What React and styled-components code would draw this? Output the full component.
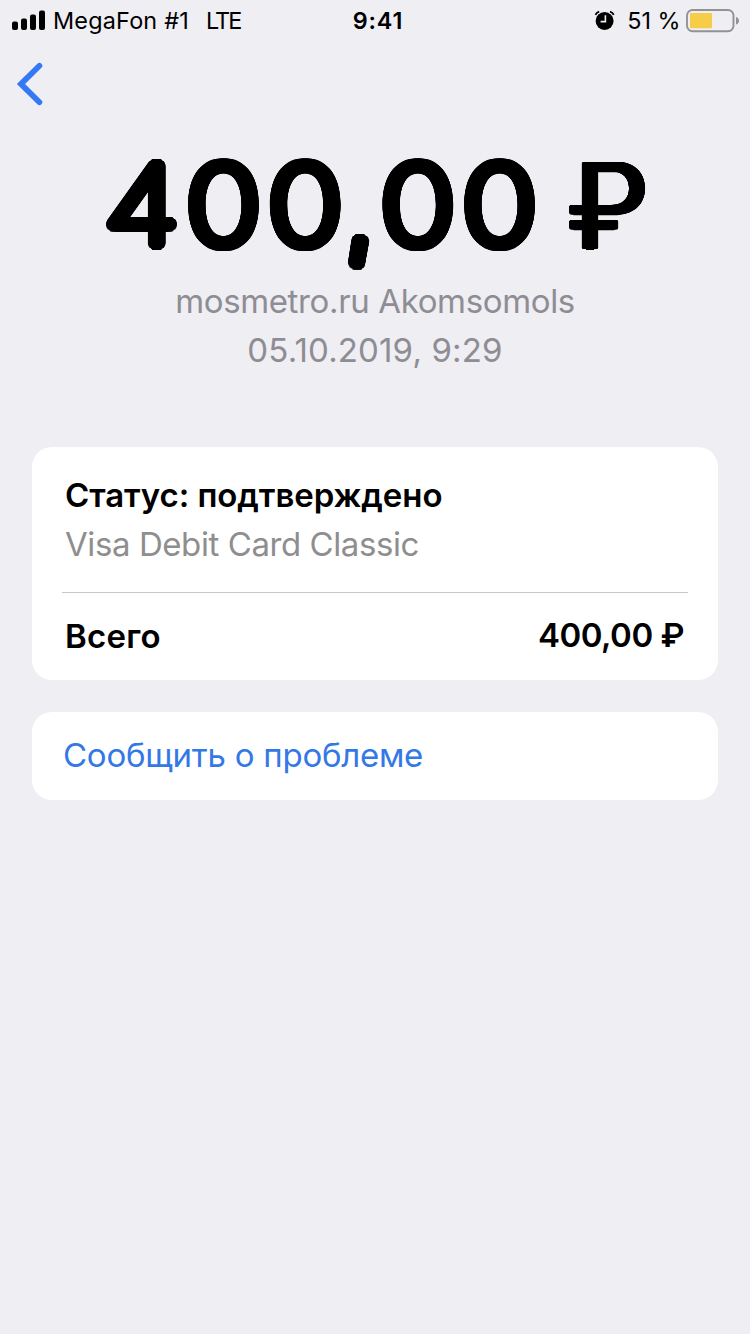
import React from "react";
import styled, { createGlobalStyle } from "styled-components";

// spreads a thin copy of the glyphs around an ellipse, so stroke ends come out round
const roundShadow = (rx, ry) => {
  const parts = [];
  for (let i = 0; i < 40; i++) {
    const angle = (i * Math.PI) / 20;
    const x = (Math.cos(angle) * rx).toFixed(2);
    const y = (Math.sin(angle) * ry).toFixed(2);
    parts.push(`${x}px ${y}px 0 currentColor`);
  }
  return parts.join(", ");
};

const SignalIcon = () => (
  <svg width="34" height="22" viewBox="0 0 34 22">
    <rect x="0" y="11.5" width="6" height="8.5" rx="2" />
    <rect x="9" y="8.5" width="6" height="11.5" rx="2" />
    <rect x="18" y="4.5" width="6" height="15.5" rx="2" />
    <rect x="27" y="0.5" width="6" height="19.5" rx="2" />
  </svg>
);

const AlarmIcon = () => (
  <svg width="20" height="20" viewBox="0 0 20 20">
    <circle cx="9.6" cy="9.9" r="9" />
    <path d="M0.5 3.9Q1.4 1.5 4.2 0.7M18.7 3.9Q17.8 1.5 15 0.7" stroke="#efeef3" strokeWidth="4" fill="none" />
    <path d="M0.5 3.9Q1.4 1.5 4.2 0.7M18.7 3.9Q17.8 1.5 15 0.7" stroke="#000" strokeWidth="1.8" fill="none" />
    <path d="M10.4 4.2V10.6H5.6" stroke="#efeef3" strokeWidth="1.6" fill="none" />
  </svg>
);

const BatteryIcon = () => (
  <svg width="54" height="24" viewBox="0 0 54 24">
    <rect x="1" y="1" width="46.5" height="21.2" rx="5.5" fill="none" stroke="#929196" strokeWidth="1.9" />
    <rect x="4" y="4" width="22" height="15.3" rx="1.2" fill="#f7cc46" />
    <path d="M50 8Q53 9 53 11.8T50 15.5Z" fill="#929196" />
  </svg>
);

const BackIcon = () => (
  <svg width="28" height="44" viewBox="0 0 28 44">
    <path d="M23.4 3.8L5 22L23.4 40.2" fill="none" stroke="#3478f6" strokeWidth="5.8" strokeLinecap="round" />
  </svg>
);

const App = () => {
  return (
    <React.Fragment>
      <GlobalStyle />
      <Screen>
        <StatusBar>
          <Carrier>
            <SignalIcon />
            <StatusText spacing="0.2px">MegaFon #1</StatusText>
            <Network spacing="-1.9px">LTE</Network>
          </Carrier>
          <Clock>9:41</Clock>
          <Power>
            <AlarmIcon />
            <StatusText spacing="0px">51 %</StatusText>
            <BatteryIcon />
          </Power>
        </StatusBar>
        <NavBar>
          <BackButton aria-label="Назад">
            <BackIcon />
          </BackButton>
        </NavBar>
        <Summary>
          <Amount>
            <Digits>
              400<Comma>,</Comma>00
            </Digits>
            <Currency>₽</Currency>
          </Amount>
          <Line color="#8e8d93" spacing="-0.36px">mosmetro.ru Akomsomols</Line>
          <Line color="#8e8d93" spacing="0.15px">05.10.2019, 9:29</Line>
        </Summary>
        <Card>
          <StatusBlock>
            <Line bold spacing="-0.08px">Статус: подтверждено</Line>
            <Line color="#8e8e8e" spacing="-0.42px">Visa Debit Card Classic</Line>
          </StatusBlock>
          <TotalRow>
            <Line bold spacing="0.25px">Всего</Line>
            <Total bold spacing="-0.5px">400,00 ₽</Total>
          </TotalRow>
        </Card>
        <Card>
          <LinkRow>
            <Line color="#3478e6" spacing="-0.25px">Сообщить о проблеме</Line>
          </LinkRow>
        </Card>
      </Screen>
    </React.Fragment>
  );
};

const GlobalStyle = createGlobalStyle`
  body {
    margin: 0;
    background: #efeef3;
  }
  svg {
    display: block;
    flex-shrink: 0;
    overflow: visible;
  }
`;
const Screen = styled.main`
  width: 750px;
  height: 1334px;
  overflow: hidden;
  background: #efeef3;
  color: #000;
  font-family: Inter, "Liberation Sans", sans-serif;
`;
const StatusBar = styled.header`
  display: grid;
  grid-template-columns: 1fr auto 1fr;
  align-items: center;
  height: 42px;
  padding: 0 10px 0 12px;
`;
const Carrier = styled.div`
  display: flex;
  align-items: center;
`;
const StatusText = styled.span`
  font-size: 23.4px;
  line-height: 42px;
  white-space: pre;
  letter-spacing: ${(props) => props.spacing};
  margin-left: 7px;
`;
const Network = styled(StatusText)`
  margin-left: 17px;
`;
const Clock = styled.span`
  padding-left: 4px;
  font-size: 23.4px;
  font-weight: 600;
  line-height: 42px;
  letter-spacing: 0.8px;
`;
const Power = styled.div`
  display: flex;
  align-items: center;
  justify-content: flex-end;
  gap: 5.5px;
`;
const NavBar = styled.nav`
  box-sizing: border-box;
  height: 86px;
  display: flex;
  align-items: center;
  padding: 0 0 2px 16px;
`;
const BackButton = styled.button`
  border: 0;
  padding: 0;
  background: none;
`;
const Summary = styled.section`
  display: flex;
  flex-direction: column;
  align-items: center;
  height: 319px;
`;
const Amount = styled.h1`
  box-sizing: border-box;
  display: flex;
  justify-content: space-between;
  width: 750px;
  height: 149px;
  margin: 0;
  padding: 0 102px 0 104px;
  white-space: pre;
`;
const Digits = styled.span`
  line-height: 154px;
  font-size: 108px;
  font-weight: 100;
  letter-spacing: 6.4px;
  text-shadow: ${roundShadow(6.2, 6.2)};
  transform: scaleX(1.165);
  transform-origin: left;
`;
const Comma = styled.span`
  display: inline-block;
  line-height: 1;
  margin: 0 -0.6px 0 -8.6px;
  transform: translateY(4px) skewX(5deg);
`;
const Currency = styled.span`
  line-height: 156px;
  font-size: 117px;
  font-weight: 300;
  text-shadow: ${roundShadow(4, 1.5)};
`;
const Line = styled.p.withConfig({ shouldForwardProp: (prop) => prop === "children" })`
  margin: 0;
  font-size: 33px;
  line-height: 49px;
  white-space: pre;
  font-weight: ${(props) => (props.bold ? 600 : 400)};
  color: ${(props) => props.color || "#000"};
  letter-spacing: ${(props) => props.spacing};
`;
const Total = styled(Line)`
  padding: 0 1px 2px 0;
`;
const Card = styled.section`
  margin: 0 32px 32px;
  padding: 0 30px;
  border-radius: 20px;
  background: #fff;
`;
const StatusBlock = styled.div`
  box-sizing: border-box;
  height: 146px;
  padding: 24px 3px 0;
  border-bottom: 1px solid #c8c7cc;
`;
const TotalRow = styled.div`
  display: flex;
  align-items: center;
  justify-content: space-between;
  height: 87px;
  padding: 0 3px;
`;
const LinkRow = styled.div`
  box-sizing: border-box;
  display: flex;
  align-items: center;
  height: 88px;
  padding: 0 0 2px 1px;
`;
export default App;
